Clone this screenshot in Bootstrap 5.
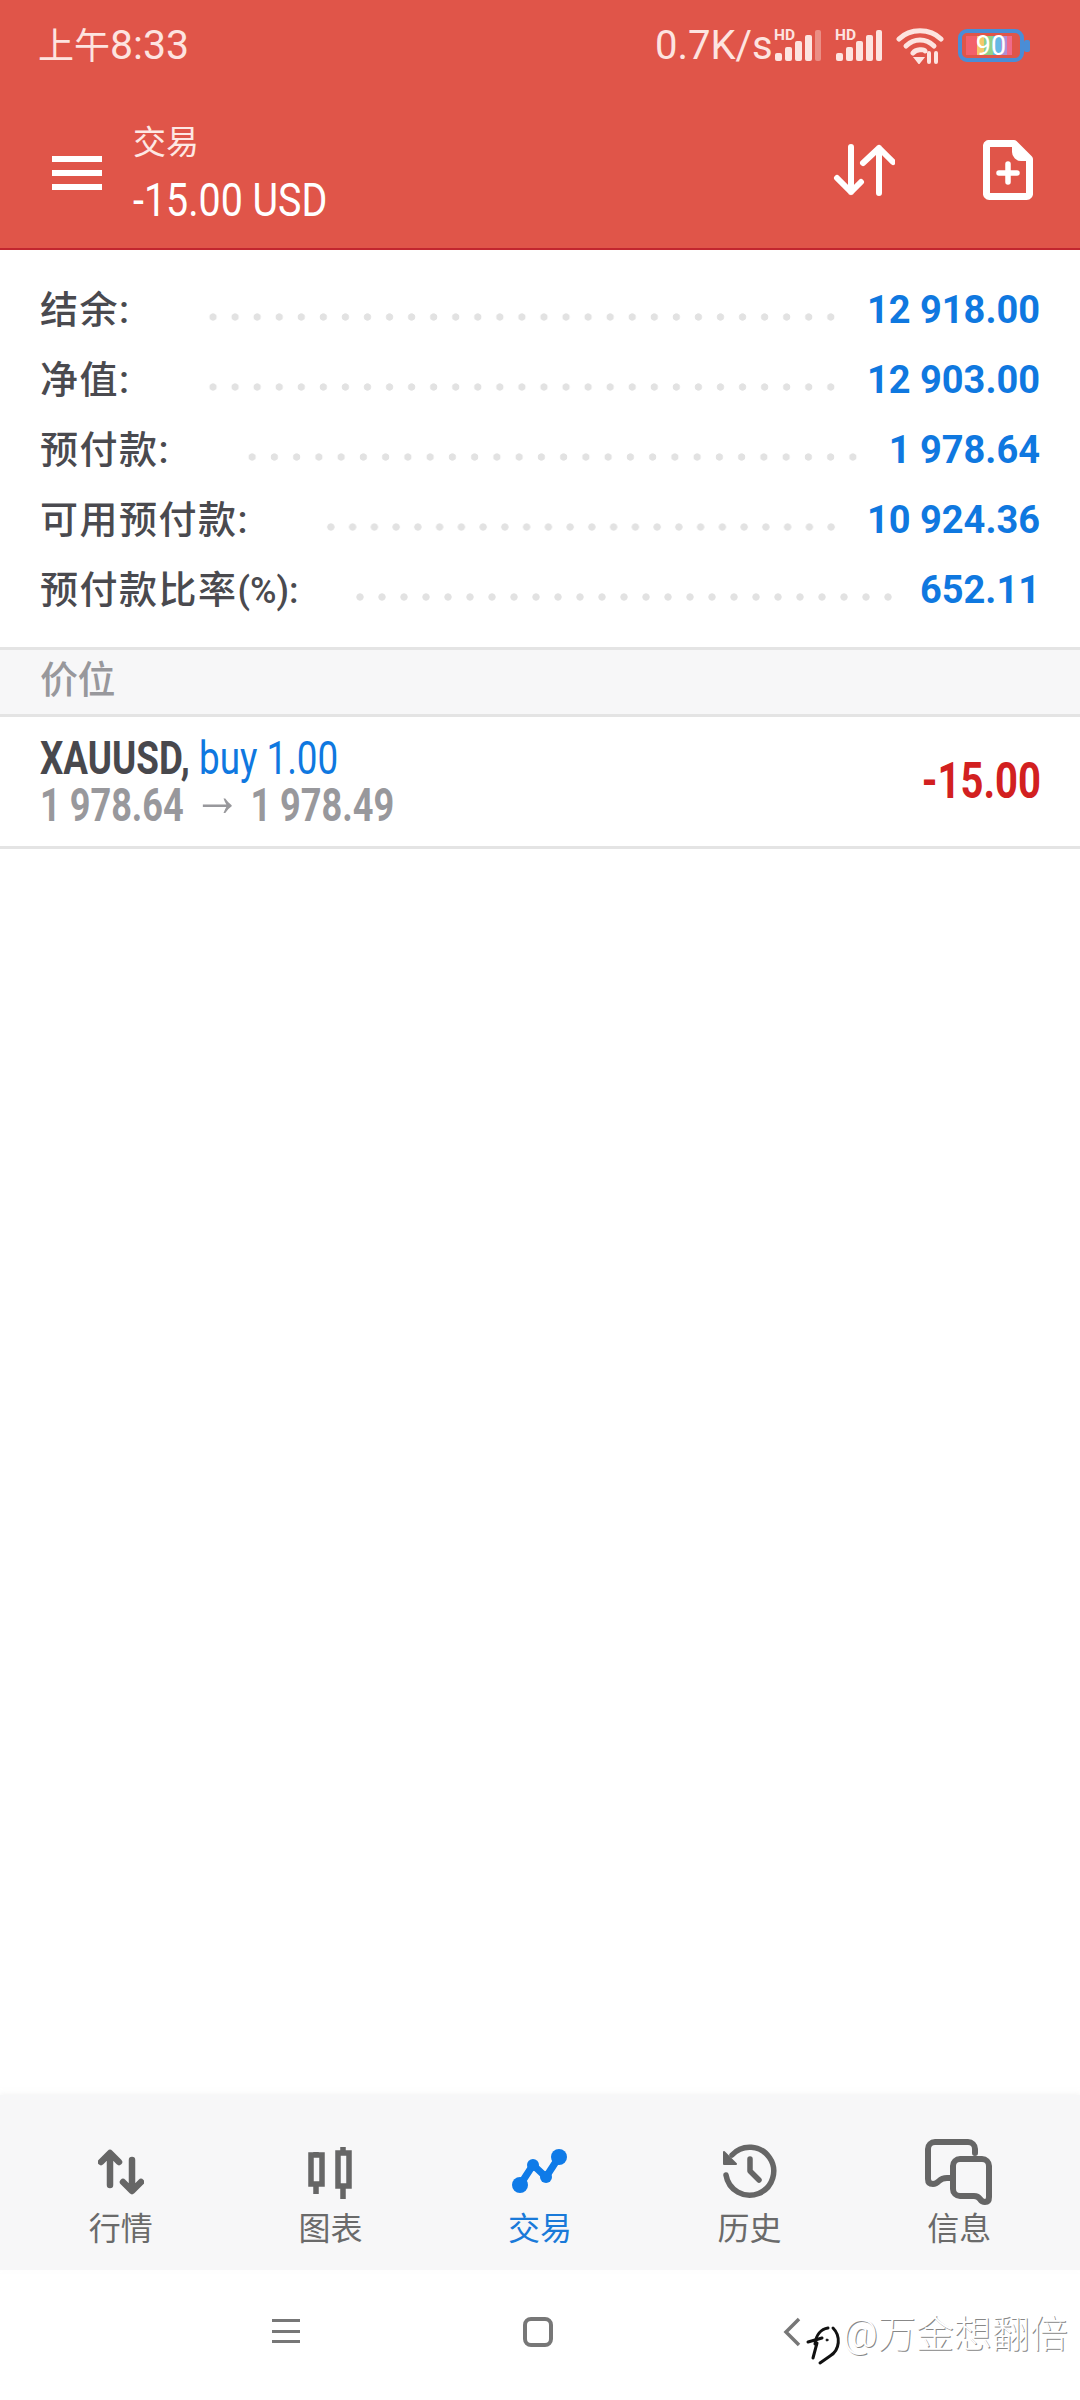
<!DOCTYPE html>
<html lang="zh">
<head>
    <meta charset="UTF-8">
    <meta name="viewport" content="width=device-width, initial-scale=1.0">
    <title>交易</title>
    <link href="https://cdn.jsdelivr.net/npm/bootstrap@5.3.0/dist/css/bootstrap.min.css" rel="stylesheet">
    <style>
        html, body { height: 2400px; overflow: hidden; }
        body { font-family: Roboto, "Noto Sans CJK SC", sans-serif; background: #fff; position: relative; }
        .app-head { background: #e05549; height: 250px; border-bottom: 2px solid #c2262f; color: #fff; }
        .status-row { height: 92px; padding: 0 50px 0 38px; }
        .status-time { font-size: 36px; color: #fde4e0; }
        .status-clock { font-size: 41px; }
        .status-speed { font-size: 40px; color: #fde4e0; width: 118px; line-height: 1; white-space: nowrap; }
        .head-row { height: 156px; padding-left: 52px; }
        .head-menu { margin-top: 6px; }
        .head-title { margin-left: 31px; margin-top: 12px; }
        .head-sub { font-size: 33px; line-height: 40px; color: #fde8e4; margin-top: -5px; }
        .head-amount { font-size: 46px; line-height: 50px; margin-top: 12px; transform: scaleX(.856); transform-origin: left; white-space: nowrap; }
        .head-actions { margin-left: auto; padding-right: 47px; gap: 88px; }
        .summary { padding: 25px 40px 22px 40px; }
        .sum-row { height: 70px; }
        .sum-label { font-size: 38px; letter-spacing: 1.5px; font-weight: 500; color: #4a4a4f; white-space: nowrap; }
        .sum-pct { font-size: 36px; letter-spacing: 0; }
        .sum-dots { height: 8px; margin: 13px 25px 0 71px; background: radial-gradient(circle, #e2e2e2 3.3px, transparent 4px) left center / 22px 8px; background-repeat: round no-repeat; }
        .sum-dots.short-gap { margin-left: 50px; margin-right: 21px; }
        .sum-value { font-size: 38px; font-weight: 700; color: #0f78e0; white-space: nowrap; }
        .sec-head { height: 70px; background: #f7f7f8; border-top: 3px solid #e4e4e4; border-bottom: 3px solid #e4e4e4; padding-left: 40px; font-size: 38px; letter-spacing: -.5px; line-height: 60px; color: #98989c; font-weight: 500; }
        .pos-row { height: 132px; border-bottom: 3px solid #e4e4e4; padding: 0 39px 0 40px; }
        .pos-line { font-size: 46px; line-height: 47px; transform: scaleX(.8); transform-origin: left; white-space: nowrap; }
        .pos-sym { font-weight: 700; color: #48484d; }
        .pos-side { color: #0f78e0; }
        .pos-price { font-weight: 700; color: #98989c; transform: scaleX(.785); }
        .pos-arrow { font-family: "Liberation Sans", sans-serif; font-size: 62px; line-height: 0; vertical-align: 5px; font-weight: 400; }
        .pos-profit { font-size: 50px; font-weight: 700; color: #d22020; transform: scaleX(.8); transform-origin: right; }
        .tab-bar { position: absolute; left: 0; right: 0; top: 2095px; height: 175px; background: #f7f7f8; padding: 0 16px; box-shadow: 0 -2px 4px rgba(240,240,240,.5); }
        .tab-item { width: 209.6px; color: #6a6a6a; font-size: 32px; line-height: 40px; }
        .tab-item.is-on { color: #1a7ad9; }
        .tab-icon { height: 70px; margin-top: 40px; margin-bottom: 4px; }
        .sys-bar { position: absolute; left: 0; right: 0; top: 2270px; height: 130px; }
        .sys-icon { position: absolute; }
        .mark-logo { position: absolute; left: 806px; top: 2322px; }
        .mark-text { position: absolute; left: 843px; top: 2306px; font-size: 38px; line-height: 56px; color: #fff; white-space: nowrap; font-weight: 300; text-shadow: 1px 1px 0 #888; }
    </style>
</head>
<body>

<header class="app-head">
    <div class="status-row d-flex align-items-center justify-content-between">
        <span class="status-time">上午<span class="status-clock">8:33</span></span>
        <div class="d-flex align-items-center">
            <span class="status-speed">0.7K/s</span>
            <svg width="52" height="46" viewBox="0 0 52 46" fill="#fde4e0" style="margin-right:9px">
                <text x="1" y="17" font-family="Roboto" font-weight="700" font-size="15.500">HD</text>
                <rect x="2" y="30" width="7" height="8" rx="2"/><rect x="12" y="24" width="7" height="14" rx="2"/><rect x="22" y="18" width="7" height="20" rx="2"/><rect x="32" y="12" width="7" height="26" rx="2"/><rect x="42" y="7" width="6" height="31" rx="2" opacity=".4"/>
            </svg>
            <svg width="52" height="46" viewBox="0 0 52 46" fill="#fde4e0" style="margin-right:10px">
                <text x="1" y="17" font-family="Roboto" font-weight="700" font-size="15.500">HD</text>
                <rect x="2" y="30" width="7" height="8" rx="2"/><rect x="12" y="24" width="7" height="14" rx="2"/><rect x="22" y="18" width="7" height="20" rx="2"/><rect x="32" y="12" width="7" height="26" rx="2"/><rect x="42" y="7" width="6" height="31" rx="2"/>
            </svg>
            <svg width="48" height="36" viewBox="0 0 48 36" fill="none" stroke="#fde4e0" stroke-width="5" stroke-linecap="round" style="margin-right:14px">
                <path d="M3 11 C14 0 34 0 45 11"/><path d="M10 18 C18 10 30 10 38 18"/><path d="M17 25 C20 21 28 21 29 23"/>
                <path d="M19 30 L23 35 L27 30 Z" fill="#fde4e0" stroke-width="2"/>
                <path d="M33 25 v9 M40 25 v9" stroke-width="4"/>
            </svg>
            <svg width="72" height="34" viewBox="0 0 72 34">
                <rect x="2" y="2" width="62" height="29" rx="7" fill="none" stroke="#4a8dd6" stroke-width="4"/>
                <rect x="66" y="11" width="6" height="12" rx="2" fill="#4a8dd6"/>
                <rect x="8" y="7" width="11" height="19" fill="#f2606a"/><rect x="19" y="7" width="7" height="19" fill="#f5c86a"/><rect x="26" y="7" width="9" height="19" fill="#8fd08a"/><rect x="35" y="7" width="8" height="19" fill="#63b8e6"/><rect x="43" y="7" width="6" height="19" fill="#b08fd4"/><rect x="49" y="7" width="5" height="19" fill="#f06a8a"/>
                <text x="33" y="26" text-anchor="middle" font-family="Roboto" font-size="27" fill="#fff">90</text>
            </svg>
        </div>
    </div>
    <div class="head-row d-flex align-items-center">
        <svg class="head-menu" width="50" height="34" viewBox="0 0 50 34" fill="#fff"><rect width="50" height="6"/><rect y="14" width="50" height="6"/><rect y="28" width="50" height="6"/></svg>
        <div class="head-title">
            <div class="head-sub">交易</div>
            <div class="head-amount">-15.00 USD</div>
        </div>
        <div class="head-actions d-flex align-items-center">
            <svg width="62" height="52" viewBox="0 0 62 52" fill="none" stroke="#fff" stroke-width="6" stroke-linecap="round" stroke-linejoin="round">
                <path d="M18 3 V48 M4 34 L18 48 L28 38"/><path d="M46 49 V4 M30 19 L46 4 L60 18"/>
            </svg>
            <svg width="50" height="60" viewBox="0 0 50 60" fill="none" stroke="#fff" stroke-width="7" stroke-linejoin="round" stroke-linecap="round">
                <path d="M5 3.5 H31 L46.5 19 V53 a3 3 0 0 1 -3 3.5 H6.5 a3 3 0 0 1 -3 -3.5 V6.500 a3 3 0 0 1 1.500 -3 Z"/>
                <path d="M31 3.500 V12 a7 7 0 0 0 7 7 H46.5" fill="#fff" stroke-width="4"/>
                <path d="M25 24 V42 M16 33 H34" stroke-width="5.500"/>
            </svg>
        </div>
    </div>
</header>

<section class="summary">
    <div class="sum-row d-flex align-items-center"><span class="sum-label">结余:</span><div class="sum-dots flex-grow-1"></div><span class="sum-value">12 918.00</span></div>
    <div class="sum-row d-flex align-items-center"><span class="sum-label">净值:</span><div class="sum-dots flex-grow-1"></div><span class="sum-value">12 903.00</span></div>
    <div class="sum-row d-flex align-items-center"><span class="sum-label">预付款:</span><div class="sum-dots flex-grow-1"></div><span class="sum-value">1 978.64</span></div>
    <div class="sum-row d-flex align-items-center"><span class="sum-label">可用预付款:</span><div class="sum-dots flex-grow-1"></div><span class="sum-value">10 924.36</span></div>
    <div class="sum-row d-flex align-items-center"><span class="sum-label">预付款比率<span class="sum-pct">(%):</span></span><div class="sum-dots short-gap flex-grow-1"></div><span class="sum-value">652.11</span></div>
</section>

<div class="sec-head">价位</div>

<div class="pos-row d-flex align-items-center justify-content-between">
    <div>
        <div class="pos-line"><span class="pos-sym">XAUUSD,</span> <span class="pos-side">buy 1.00</span></div>
        <div class="pos-line pos-price">1 978.64 <span class="pos-arrow">→</span> 1 978.49</div>
    </div>
    <div class="pos-profit">-15.00</div>
</div>

<nav class="tab-bar d-flex">
    <div class="tab-item text-center">
        <div class="tab-icon d-flex justify-content-center align-items-end">
            <svg width="46" height="62" viewBox="0 0 46 62" fill="none" stroke="#666" stroke-width="6.500" stroke-linecap="round" stroke-linejoin="round" class="mb-1"><path d="M12 46 V16 M3 23 L12 14 L21 23"/><path d="M34 21 V51 M25 43 L34 52 L43 43"/></svg>
        </div>
        <div>行情</div>
    </div>
    <div class="tab-item text-center">
        <div class="tab-icon d-flex justify-content-center align-items-end">
            <svg width="46" height="66" viewBox="0 0 46 66" fill="none" stroke="#666" stroke-width="5.500"><path d="M9 13 V55 M36 8 V60"/><rect x="4" y="16" width="11" height="29" fill="#f7f7f8"/><rect x="31" y="14" width="11" height="33" fill="#f7f7f8"/></svg>
        </div>
        <div>图表</div>
    </div>
    <div class="tab-item text-center is-on">
        <div class="tab-icon d-flex justify-content-center align-items-end">
            <svg width="58" height="62" viewBox="0 0 58 62" fill="#0f7be8" stroke="none"><path d="M9 42 L22 22 L35 34 L48 14" fill="none" stroke="#0f7be8" stroke-width="7"/><circle cx="9" cy="42" r="8"/><circle cx="22" cy="22" r="6"/><circle cx="35" cy="34" r="6"/><circle cx="48" cy="14" r="8"/></svg>
        </div>
        <div>交易</div>
    </div>
    <div class="tab-item text-center">
        <div class="tab-icon d-flex justify-content-center align-items-end">
            <svg width="58" height="62" viewBox="0 0 58 62" fill="none" stroke="#666" stroke-width="5.500" stroke-linecap="round" stroke-linejoin="round"><path d="M5 32 A24 24 0 1 0 11 12"/><path d="M3 9 L3 21 L15 21 Z" fill="#666" stroke-width="2"/><path d="M29 16 V28 L38 37"/></svg>
        </div>
        <div>历史</div>
    </div>
    <div class="tab-item text-center">
        <div class="tab-icon d-flex justify-content-center align-items-end">
            <svg width="68" height="66" viewBox="0 0 68 66" fill="none" stroke="#666" stroke-width="6" stroke-linejoin="round" stroke-linecap="round"><path d="M50 14 V10 a7 7 0 0 0 -7 -7 H10 a7 7 0 0 0 -7 7 V40 q0 5 5 5 q3 0 6 -3 q3 -3 8 -3 H28"/><path d="M35 20 H57 a7 7 0 0 1 7 7 V58 q0 5 -4 5 q-3 0 -5 -3 q-2 -3 -6 -3 H35 a7 7 0 0 1 -7 -7 V27 a7 7 0 0 1 7 -7 Z"/></svg>
        </div>
        <div>信息</div>
    </div>
</nav>

<div class="sys-bar">
    <svg class="sys-icon" style="left:272px;top:49px" width="28" height="24" viewBox="0 0 28 24" fill="#777"><rect width="28" height="3"/><rect y="11" width="28" height="3"/><rect y="21" width="28" height="3"/></svg>
    <svg class="sys-icon" style="left:523px;top:47px" width="30" height="30" viewBox="0 0 30 30" fill="none" stroke="#777" stroke-width="4"><rect x="2" y="2" width="26" height="26" rx="6"/></svg>
    <svg class="sys-icon" style="left:783px;top:47px" width="18" height="30" viewBox="0 0 18 30" fill="none" stroke="#777" stroke-width="3.500"><path d="M16 2 L3 15 L16 28"/></svg>
</div>

<svg class="mark-logo" width="36" height="44" viewBox="0 0 36 44" fill="none" stroke="#111" stroke-width="3" stroke-linecap="round">
    <path d="M9 22 C10 13 15 7 22 6"/><path d="M2 20 L16 16"/><path d="M11 21 L7 36"/><path d="M27 6 C35 14 34 28 24 34 L14 41"/><circle cx="21" cy="18" r="1" fill="#111" stroke-width="1"/>
</svg>
<div class="mark-text">@万金想翻倍</div>

</body>
</html>
